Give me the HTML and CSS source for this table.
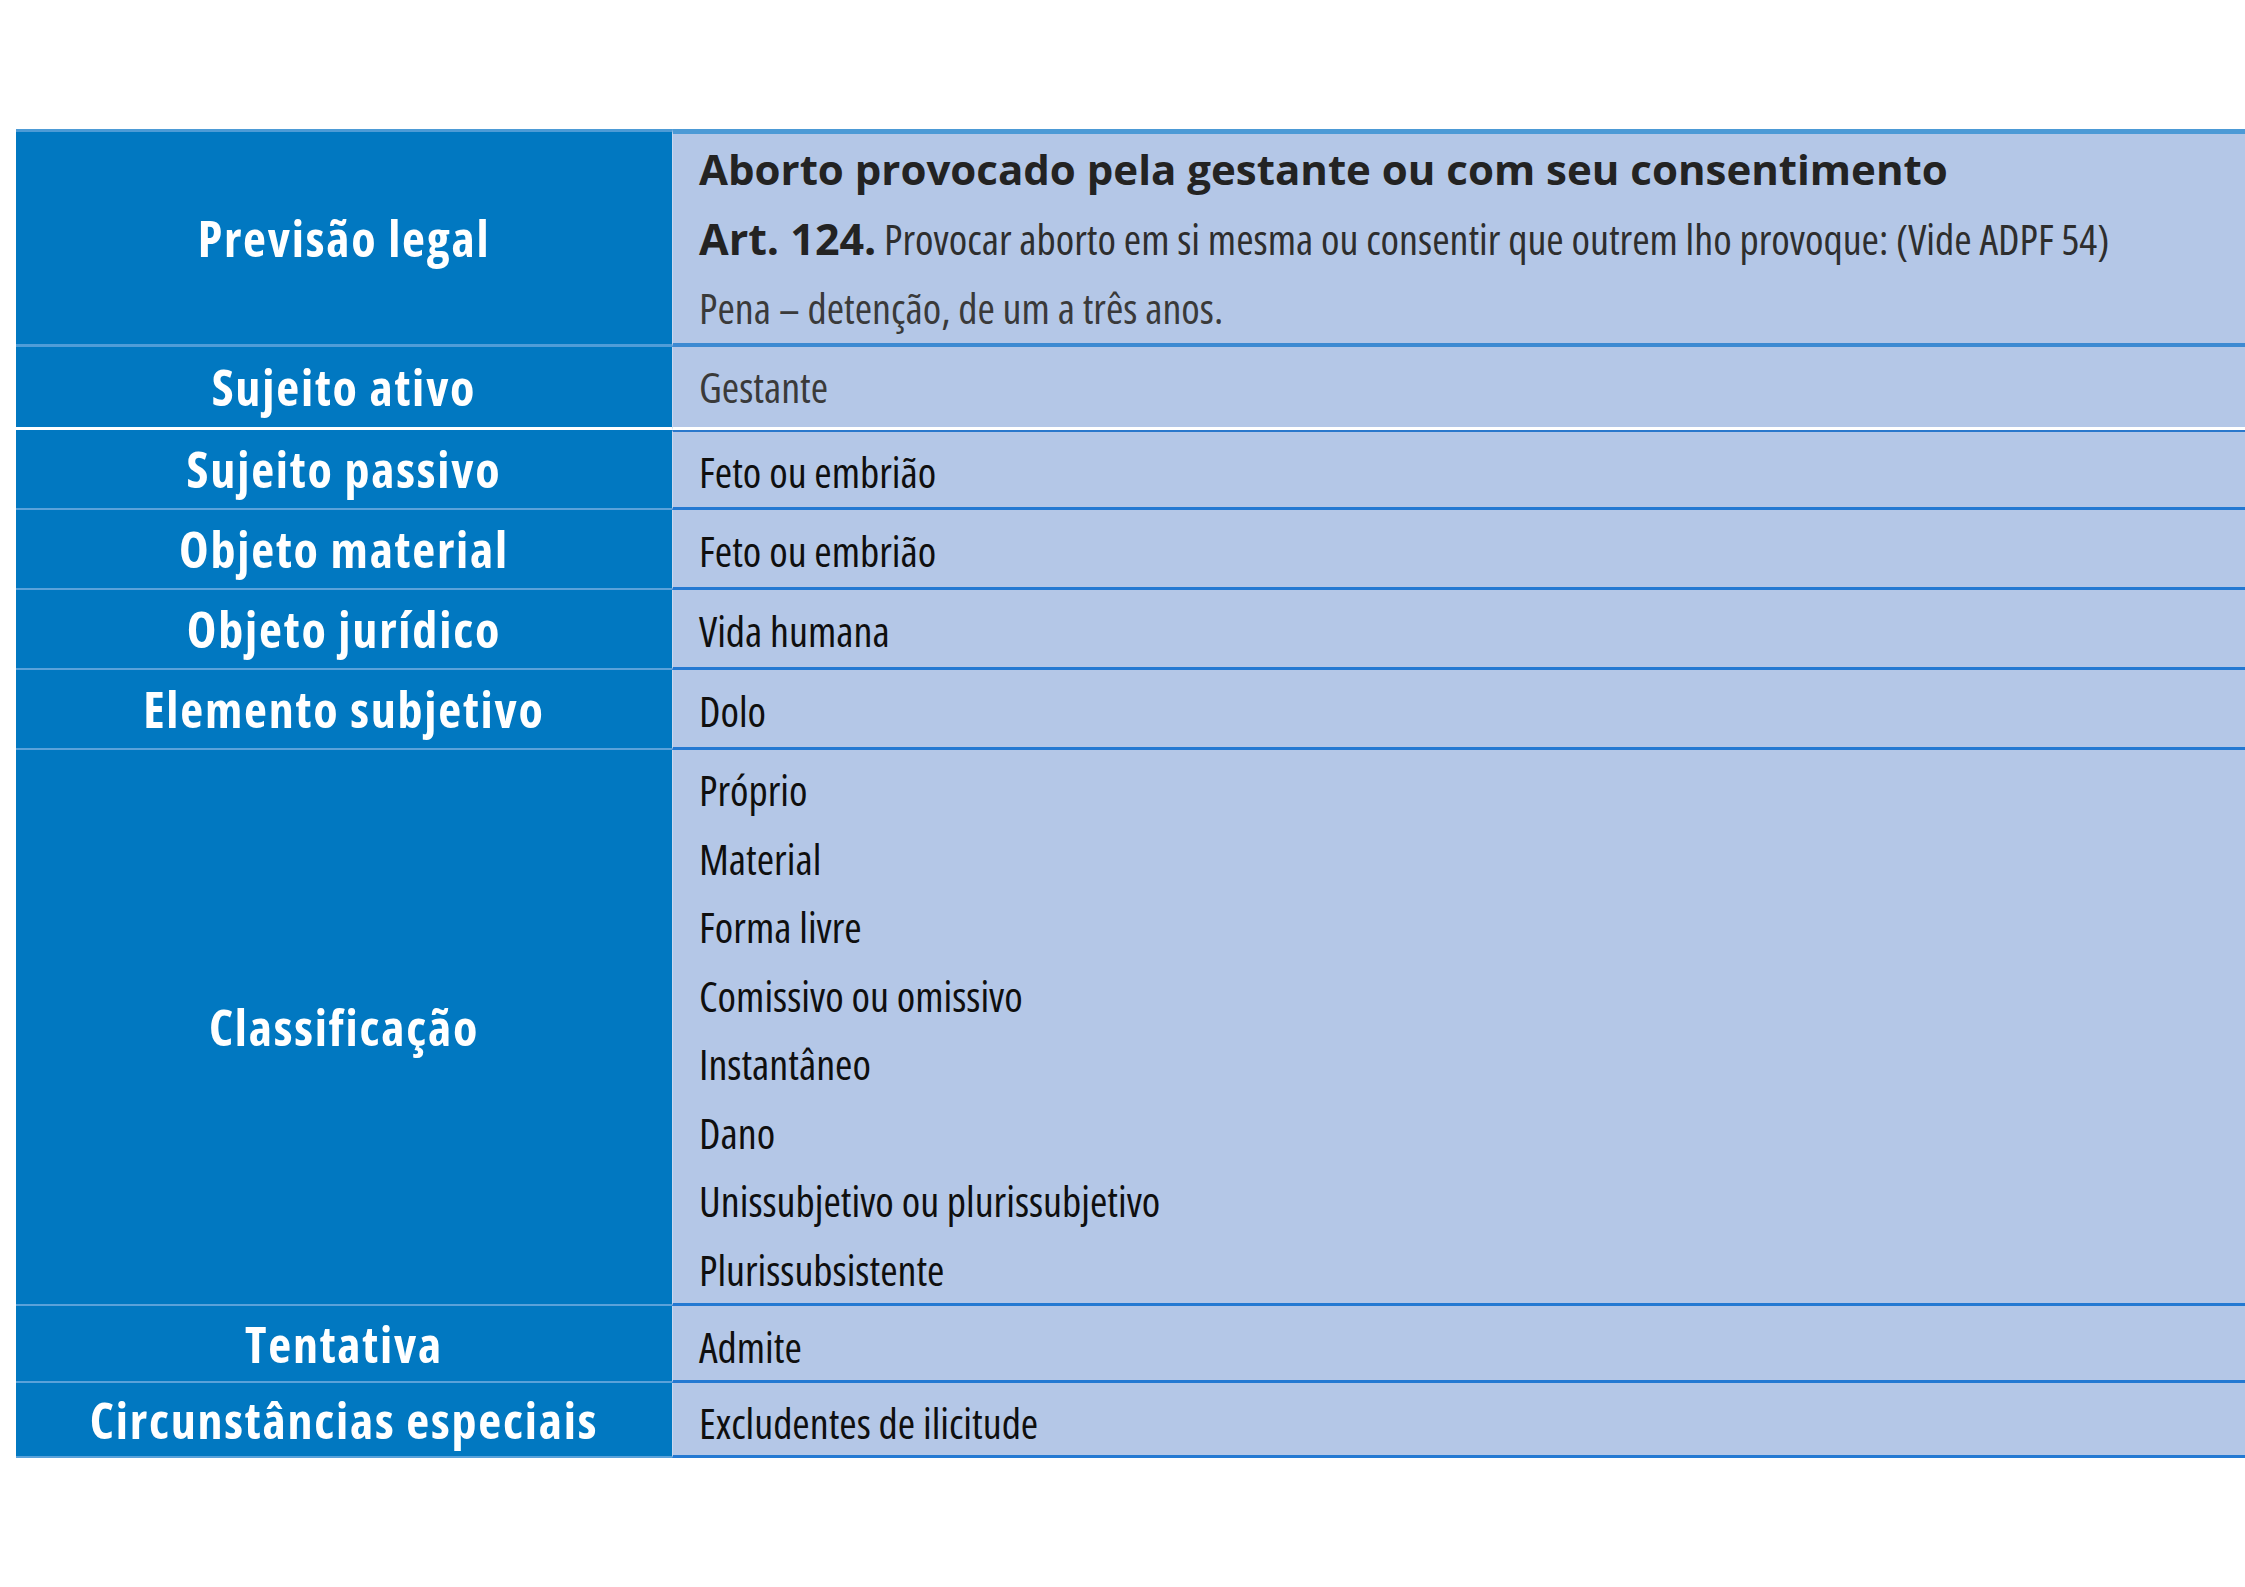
FILE: index.html
```html
<!DOCTYPE html>
<html lang="pt-BR">
<head>
<meta charset="utf-8">
<title>Aborto provocado pela gestante</title>
<link rel="stylesheet" href="styles.css">
</head>
<body>
<div class="sheet">
  <div class="table">
    <div class="label row-first">Previsão legal</div>
    <div class="value row-first lead">
      <div class="line title">Aborto provocado pela gestante ou com seu consentimento</div>
      <div class="line art-line"><b class="art">Art. 124.</b> Provocar aborto em si mesma ou consentir que outrem lho provoque: (Vide ADPF 54)</div>
      <div class="line pena">Pena – detenção, de um a três anos.</div>
    </div>

    <div class="label row-break">Sujeito ativo</div>
    <div class="value row-break muted"><div class="line">Gestante</div></div>

    <div class="label">Sujeito passivo</div>
    <div class="value after-break"><div class="line">Feto ou embrião</div></div>

    <div class="label">Objeto material</div>
    <div class="value"><div class="line">Feto ou embrião</div></div>

    <div class="label">Objeto jurídico</div>
    <div class="value"><div class="line">Vida humana</div></div>

    <div class="label">Elemento subjetivo</div>
    <div class="value"><div class="line">Dolo</div></div>

    <div class="label">Classificação</div>
    <div class="value list">
      <div class="line">Próprio</div>
      <div class="line">Material</div>
      <div class="line">Forma livre</div>
      <div class="line">Comissivo ou omissivo</div>
      <div class="line">Instantâneo</div>
      <div class="line">Dano</div>
      <div class="line">Unissubjetivo ou plurissubjetivo</div>
      <div class="line">Plurissubsistente</div>
    </div>

    <div class="label">Tentativa</div>
    <div class="value low"><div class="line">Admite</div></div>

    <div class="label">Circunstâncias especiais</div>
    <div class="value low"><div class="line">Excludentes de ilicitude</div></div>
  </div>
</div>
</body>
</html>
```
FILE: styles.css
```css
html, body {
  margin: 0;
  padding: 0;
  background: #ffffff;
  overflow: hidden;
}

.sheet {
  padding: 129px 0 0 16px;
}

.table {
  display: grid;
  grid-template-columns: 656px 1fr;
  grid-template-rows: 218px 83px 80px 80px 80px 80px 556px 77px 75px;
}

.label,
.value {
  box-sizing: border-box;
  display: flex;
}

.label {
  background: #0178c1;
  color: #ffffff;
  font-family: "Open Sans", "Liberation Sans", sans-serif;
  font-weight: 700;
  font-stretch: 87.5%;
  font-size: 50px;
  letter-spacing: 1.8px;
  align-items: center;
  justify-content: center;
  text-align: center;
  border-bottom: 2px solid #5aa2da;
  white-space: nowrap;
}

.value {
  background: #b4c7e7;
  color: #0f0f0f;
  font-family: "Open Sans", "Liberation Sans Narrow", sans-serif;
  font-weight: 450;
  font-stretch: 75%;
  font-size: 42px;
  flex-direction: column;
  justify-content: center;
  align-items: flex-start;
  padding: 6px 0 0 26px;
  border-bottom: 3px solid #2479d2;
  border-left: 1px solid #c9d8f0;
  white-space: nowrap;
}

.line {
  line-height: 68.5px;
}

/* first row */
.label.row-first {
  border-top: 3px solid #4d9bd6;
  border-bottom: 3px solid #4f9dd8;
}

.value.row-first {
  border-top: 5px solid #4c9ad6;
  border-bottom: 4px solid #3d8ad2;
  justify-content: flex-start;
  padding-top: 0;
}

.lead .line {
  line-height: 69.5px;
}

.title {
  font-stretch: 100%;
  font-weight: 700;
  font-size: 42px;
  color: #232323;
}

.art-line {
  color: #2e2e2e;
}

.art {
  font-stretch: 100%;
  font-weight: 700;
  font-size: 43px;
  line-height: 1;
  color: #232323;
}

.pena {
  color: #3a3a3a;
}

/* row followed by the white gap */
.label.row-break,
.value.row-break {
  border-bottom: 3px solid #ffffff;
}

.value.row-break {
  padding-top: 0;
}

.muted {
  color: #3a3a3a;
}

.value.after-break {
  border-top: 2px solid #2a78cc;
}

.value.list {
  justify-content: flex-start;
  padding-top: 6px;
}

.value.low {
  padding-top: 9px;
}
```
